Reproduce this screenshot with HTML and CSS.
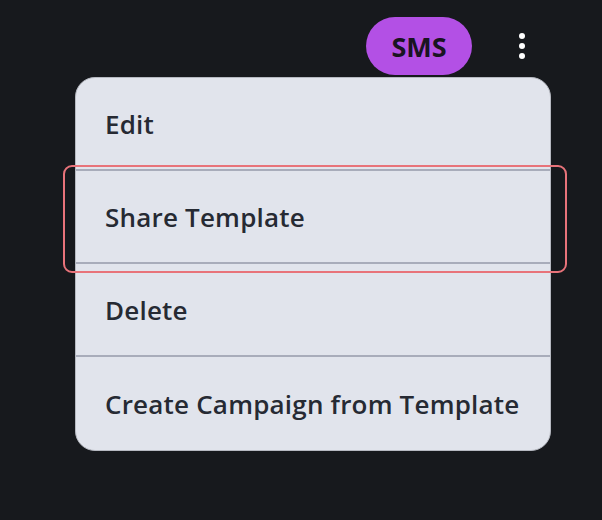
FILE: index.html
```html
<!DOCTYPE html>
<html lang="en">
<head>
  <meta charset="UTF-8" />
  <meta name="viewport" content="width=device-width, initial-scale=1.0" />
  <title>Template actions</title>
  <link rel="stylesheet" href="styles.css">
</head>
<body>
  <div class="wrap">
    <div class="top-bar">
      <span class="pill">SMS</span>
      <button class="more" aria-label="More actions">
        <span class="dot"></span>
        <span class="dot"></span>
        <span class="dot"></span>
      </button>
    </div>
    <ul class="menu">
      <li class="menu-item">Edit</li>
      <li class="menu-item active">Share Template</li>
      <li class="menu-item">Delete</li>
      <li class="menu-item">Create Campaign from Template</li>
    </ul>
  </div>
</body>
</html>
```

FILE: styles.css
```css
* {
  box-sizing: border-box;
}
body {
  margin: 0;
  background: #17191d;
  font-family: "Open Sans", "Noto Sans", sans-serif;
  color: #262a33;
  min-height: 520px;
}
.wrap {
  padding: 17px 0 0 75px;
  width: 602px;
}
.top-bar {
  display: flex;
  justify-content: flex-end;
  align-items: center;
  gap: 38px;
  height: 58px;
  width: 459px;
}
.pill {
  display: flex;
  align-items: center;
  justify-content: center;
  width: 106px;
  height: 58px;
  border-radius: 29px;
  background: #b350e5;
  color: #1a1422;
  font-size: 27px;
  font-weight: 700;
}
.more {
  display: flex;
  flex-direction: column;
  align-items: center;
  gap: 4px;
  width: 24px;
  padding: 0;
  border: 0;
  background: none;
}
.dot {
  width: 6px;
  height: 6px;
  border-radius: 50%;
  background: #fff;
}
.menu {
  position: relative;
  list-style: none;
  margin: 2px 0 0;
  padding: 0;
  width: 476px;
  background: #e1e4ec;
  border: 1px solid #b6b9c1;
  border-radius: 20px;
}
.menu-item {
  display: flex;
  align-items: center;
  height: 93px;
  padding: 0 0 0 29px;
  font-size: 26px;
  font-weight: 600;
  letter-spacing: 0.2px;
  border-bottom: 2px solid #a8acba;
}
.menu-item:last-child {
  border-bottom: 0;
}
.menu-item.active::after {
  content: "";
  position: absolute;
  left: -13px;
  top: 87px;
  width: 500px;
  height: 104px;
  border: 2.5px solid #e8737a;
  border-radius: 9px;
}
```
